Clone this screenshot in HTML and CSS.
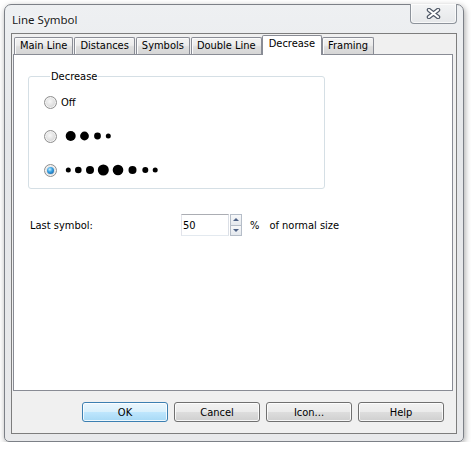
FILE: index.html
```html
<!DOCTYPE html>
<html lang="en">
<head>
    <meta charset="UTF-8">
    <title>Line Symbol</title>
    <link rel="stylesheet" href="styles.css">
</head>
<body>

    <div class="window">
        <div class="titlebar">
            <span class="title">Line Symbol</span>
            <button class="close-btn" aria-label="Close">
                <svg width="15" height="11" viewBox="0 0 15 11">
                    <path d="M3 2 L12 9 M12 2 L3 9" stroke="#4f5866" stroke-width="4.5" stroke-linecap="round" fill="none"/>
                    <path d="M3 2 L12 9 M12 2 L3 9" stroke="#ffffff" stroke-width="2.2" stroke-linecap="round" fill="none"/>
                </svg>
            </button>
        </div>

        <div class="client">
            <div class="tabs">
                <div class="tab">Main Line</div>
                <div class="tab">Distances</div>
                <div class="tab">Symbols</div>
                <div class="tab">Double Line</div>
                <div class="tab active">Decrease</div>
                <div class="tab">Framing</div>
            </div>

            <div class="tab-page">
                <fieldset class="group">
                    <legend>Decrease</legend>

                    <label class="radio-row">
                        <span class="radio"></span>
                        <span>Off</span>
                    </label>

                    <!-- symbols get smaller towards the end -->
                    <label class="radio-row">
                        <span class="radio"></span>
                        <svg class="dots" width="110" height="14" viewBox="0 0 110 14">
                            <circle cx="9.7" cy="7" r="5"/>
                            <circle cx="23.5" cy="7" r="4.4"/>
                            <circle cx="36.5" cy="7" r="3.4"/>
                            <circle cx="47.3" cy="7" r="2.5"/>
                        </svg>
                    </label>

                    <!-- symbols get smaller towards both ends -->
                    <label class="radio-row">
                        <span class="radio checked"></span>
                        <svg class="dots" width="110" height="14" viewBox="0 0 110 14">
                            <circle cx="7.3" cy="7" r="2.5"/>
                            <circle cx="17.3" cy="7" r="3.3"/>
                            <circle cx="29" cy="7" r="4"/>
                            <circle cx="42.3" cy="7" r="5.5"/>
                            <circle cx="57" cy="7" r="5.3"/>
                            <circle cx="71.5" cy="7" r="4"/>
                            <circle cx="84.3" cy="7" r="3"/>
                            <circle cx="94.2" cy="7" r="2.5"/>
                        </svg>
                    </label>
                </fieldset>

                <div class="field-row">
                    <span class="field-label">Last symbol:</span>
                    <div class="spin">
                        <input class="spin-input" type="text" value="50">
                        <div class="spin-btns">
                            <span class="spin-btn up"></span>
                            <span class="spin-btn down"></span>
                        </div>
                    </div>
                    <span class="unit">%</span>
                    <span class="unit-note">of normal size</span>
                </div>
            </div>

            <div class="buttons">
                <button class="btn default">OK</button>
                <button class="btn">Cancel</button>
                <button class="btn">Icon...</button>
                <button class="btn">Help</button>
            </div>
        </div>
    </div>

</body>
</html>
```

FILE: styles.css
```css
body {
    margin: 0;
    background: #ffffff;
    font-family: "DejaVu Sans Condensed", "Liberation Sans", sans-serif;
    font-size: 11px;
    color: #000000;
}


/* window frame */

.window {
    position: relative;
    display: flex;
    flex-direction: column;
    margin: 4px 0 0 4px;
    width: 458px;
    height: 436px;
    border: 1px solid #7c8087;
    border-radius: 7px 7px 5px 5px;
    background: linear-gradient(180deg, #eef0f2 0%, #e5e7ea 30%, #e8e9eb 100%);
    box-shadow: 1px 2px 6px rgba(0, 0, 0, 0.35);
}

.titlebar {
    flex: none;
    height: 28px;
    display: flex;
    align-items: center;
    padding-left: 7px;
}

.title {
    font-family: "Noto Sans", "Open Sans", sans-serif;
    font-size: 11.5px;
    color: #1b1b1b;
    text-shadow: 0 0 8px #ffffff, 0 0 4px #ffffff;
}

.close-btn {
    position: absolute;
    top: -1px;
    right: 6px;
    width: 47px;
    height: 20px;
    padding: 0;
    display: flex;
    align-items: center;
    justify-content: center;
    border: 1px solid #8d939b;
    border-top: none;
    border-radius: 0 0 4px 4px;
    background: linear-gradient(180deg, #f3f4f5 0%, #e6e8ea 100%);
    box-shadow: inset 0 0 0 1px rgba(255, 255, 255, 0.7);
}


/* client area */

.client {
    flex: 1;
    display: flex;
    flex-direction: column;
    margin: 0 6px 7px 6px;
    border: 1px solid #7d7d7d;
    background: #f0f0f0;
}

.tabs {
    flex: none;
    display: flex;
    align-items: flex-end;
    height: 19px;
    padding: 1px 0 0 2px;
    position: relative;
    z-index: 1;
}

.tab {
    height: 16px;
    line-height: 16px;
    padding: 0 5px;
    border: 1px solid #898c95;
    border-bottom: none;
    border-radius: 2px 2px 0 0;
    background: linear-gradient(180deg, #f3f3f3 0%, #ececec 45%, #dedede 55%, #d6d6d6 100%);
    box-shadow: inset 1px 1px 0 #fbfbfb;
    white-space: nowrap;
}

.tab + .tab {
    margin-left: 1px;
}

.tab.active {
    height: 19px;
    line-height: 15px;
    margin: 0 -1px -1px 0;
    padding: 0 6px;
    background: #ffffff;
    box-shadow: none;
}

.tab-page {
    flex: none;
    height: 320px;
    margin: 0 3px 0 1px;
    padding: 15px 14px 0 14px;
    border: 1px solid #898c95;
    background: #ffffff;
}


/* group box with radio buttons */

.group {
    margin: 0;
    padding: 2px 0 1px 15px;
    width: 280px;
    border: 1px solid #d5dfe5;
    border-radius: 3px;
}

.group legend {
    margin-left: 6px;
    padding: 0 1px;
    line-height: 13px;
}

.radio-row {
    display: flex;
    align-items: center;
    height: 34px;
}

.radio {
    position: relative;
    width: 11px;
    height: 11px;
    margin-right: 4px;
    border: 1px solid #8f8f8f;
    border-radius: 50%;
    background: radial-gradient(circle at 45% 40%, #f8f8f8 0%, #e2e2e2 45%, #c8c8c8 100%);
    box-shadow: inset 0 0 0 1px #f4f4f4;
}

.radio.checked::after {
    content: "";
    position: absolute;
    top: 2px;
    left: 2px;
    width: 7px;
    height: 7px;
    border-radius: 50%;
    background: radial-gradient(circle at 40% 35%, #c9f0ff 0%, #3aa3e4 40%, #0b4f92 100%);
}

.dots {
    display: block;
    fill: #000000;
}


/* "Last symbol" spin field */

.field-row {
    display: flex;
    align-items: center;
    margin-top: 25px;
    padding-left: 2px;
    height: 22px;
}

.field-label {
    width: 151px;
}

.spin {
    display: flex;
    align-items: stretch;
    gap: 1px;
    height: 22px;
}

.spin-input {
    width: 45px;
    height: 20px;
    box-sizing: content-box;
    margin: 0;
    padding: 0 0 0 1px;
    border: 1px solid #abadb3;
    border-color: #abadb3 #dbdfe6 #e3e9ef #e2e3ea;
    font: inherit;
    outline: none;
}

.spin-btns {
    display: flex;
    flex-direction: column;
    width: 12px;
}

.spin-btn {
    position: relative;
    flex: 1;
    border: 1px solid #b5bdc8;
    background: linear-gradient(180deg, #f7f8f9 0%, #e4e8ed 100%);
}

.spin-btn.down {
    border-top: none;
}

.spin-btn::after {
    content: "";
    position: absolute;
    left: 2px;
    top: 3px;
    border-left: 3px solid transparent;
    border-right: 3px solid transparent;
}

.spin-btn.up::after {
    border-bottom: 3px solid #4d6185;
}

.spin-btn.down::after {
    top: 3px;
    border-top: 3px solid #4d6185;
}

.unit {
    margin-left: 8px;
}

.unit-note {
    margin-left: 10px;
}


/* dialog buttons */

.buttons {
    display: flex;
    justify-content: flex-end;
    gap: 6px;
    padding: 11px 12px 0 0;
}

.btn {
    width: 86px;
    height: 20px;
    padding: 0;
    border: 1px solid #707070;
    border-radius: 3px;
    background: linear-gradient(180deg, #f2f2f2 0%, #ebebeb 48%, #dddddd 52%, #cfcfcf 100%);
    box-shadow: inset 0 0 0 1px rgba(255, 255, 255, 0.8);
    font: inherit;
    color: #000000;
}

.btn.default {
    border-color: #3c7fb1;
    background: linear-gradient(180deg, #eaf6fd 0%, #d9f0fc 48%, #bee6fd 52%, #a7d9f5 100%);
}
```
